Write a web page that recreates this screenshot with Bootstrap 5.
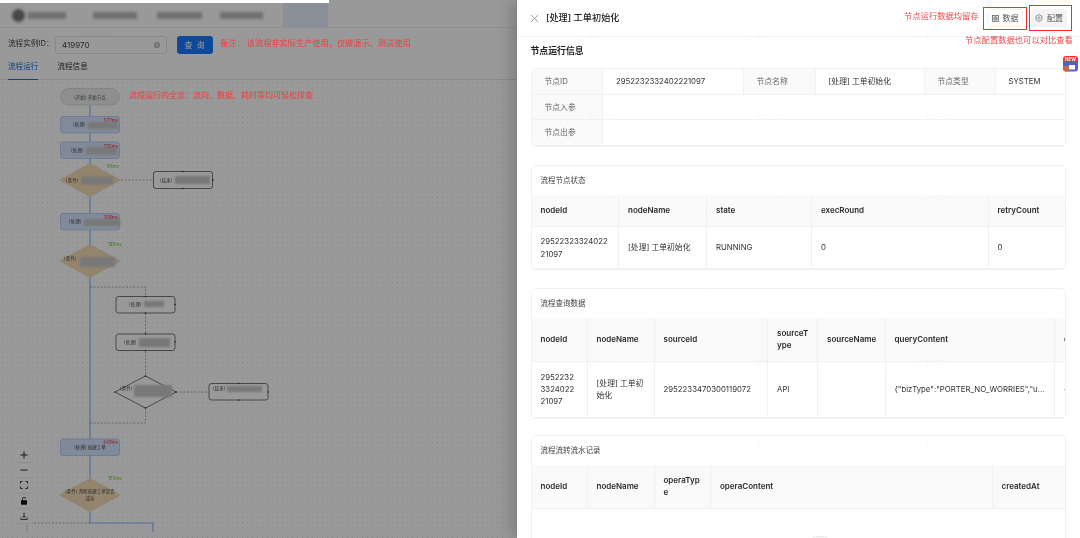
<!DOCTYPE html>
<html lang="zh-CN">
<head>
<meta charset="UTF-8" />
<meta name="viewport" content="width=device-width, initial-scale=1" />
<title>流程实例</title>
<link href="https://cdn.jsdelivr.net/npm/bootstrap@5.3.3/dist/css/bootstrap.min.css" rel="stylesheet" />
<style>
    html, body { height: 100%; overflow: hidden; }
    body {
        font-family: Inter, "Noto Sans CJK SC", sans-serif;
        font-size: 8px;
        color: #333;
        background: #fff;
    }
    .page-wrap { height: 538px; }

    /* left pane, dimmed by the drawer mask */
    .left-pane { width: 517px; flex: none; filter: blur(.55px); background: #fff; }
    .left-mask { position: absolute; inset: 0; background: rgba(0, 0, 0, .4); z-index: 1; }
    .top-strip { height: 3px; width: 329px; background: #fff; position: relative; z-index: 2; }
    .head-bar { height: 25px; border-bottom: 1px solid #f0f0f0; padding-left: 12px; }
    .head-logo { width: 13px; height: 13px; border-radius: 50%; background: #777; filter: blur(1.5px); }
    .head-block { height: 7px; background: #bbb; filter: blur(1.8px); }
    .head-active { width: 45px; height: 25px; background: #e6efff; margin-left: 20px; }
    .w-38 { width: 38px; margin-left: 3px; }
    .w-44 { width: 44px; margin-left: 27px; }
    .w-45 { width: 45px; margin-left: 20px; }
    .w-43 { width: 43px; margin-left: 18px; }

    .query-row { padding: 8px 0 0 8px; height: 26px; }
    .query-label { font-size: 7.6px; color: #444; width: 47px; }
    .query-input { width: 112px; height: 18px; border: 1px solid #e2e2e2; border-radius: 3px; padding: 0 6px; font-size: 8px; color: #444; }
    .clear-dot { width: 6px; height: 6px; }
    .query-btn { width: 36px; height: 18px; margin-left: 10px; padding: 0; font-size: 8px; line-height: 18px; border: 0; border-radius: 3px; background: #1a78ff; color: #fff; letter-spacing: 1px; }
    .note-red { color: #f23c3c; position: relative; z-index: 2; }
    .query-note { margin-left: 7px; font-size: 8.2px; line-height: 15px; }

    .tab-row { height: 26px; padding-left: 8px; border-bottom: 1px solid #e8e8e8; }
    .tab-link { font-size: 7.6px; color: #333; height: 26px; line-height: 26px; padding: 0; margin-right: 19px; text-decoration: none; }
    .tab-link.active { color: #1a6fe0; border-bottom: 1px solid #1a6fe0; height: 26px; }

    .flow-canvas {
        height: 458px;
        background-image: radial-gradient(rgba(0, 0, 0, .09) .5px, transparent .7px);
        background-size: 5px 5px;
        margin-right: 12px;
    }
    .flow-svg { position: absolute; left: 0; top: 0; font-family: Inter, "Noto Sans CJK SC", sans-serif; }
    .flow-note { position: absolute; left: 129px; top: 10px; font-size: 8px; line-height: 10px; }
    .zoom-bar { position: absolute; left: 16px; top: 368px; width: 16px; background: #fff; z-index: 0; }
    .zoom-btn { height: 15.2px; border-bottom: 1px solid #eee; }

    /* right drawer */
    .drawer { width: 563px; flex: none; background: #fff; box-shadow: -6px 0 14px rgba(0, 0, 0, .18); z-index: 3; filter: blur(.25px); }
    .drawer-head { height: 37px; border-bottom: 1px solid #f3f3f3; padding-left: 13px; }
    .drawer-title { font-size: 9.2px; font-weight: 500; color: #222; margin-left: 7px; }
    .act-note { color: #f04848; font-size: 8.3px; position: absolute; }
    .note-save { left: 387px; top: 10px; }
    .note-conf { left: 448px; top: 34px; }
    .act-box { position: absolute; border: 1.5px solid #f03030; }
    .box-data { left: 466px; top: 7px; width: 44px; height: 23px; }
    .box-conf { left: 512px; top: 5px; width: 43px; height: 26px; }
    .act-btn { position: absolute; top: 9px; height: 18px; padding: 0; font-size: 8px; color: #555; border-radius: 3px; gap: 4px; }
    .btn-data { left: 470px; width: 36px; background: #fff; border: 1px solid #f3f3f3; }
    .btn-conf { left: 514px; width: 36px; background: #f4f4f4; border: 0; }
    .new-tag { position: absolute; left: 545px; top: 56px; }

    .drawer-body { padding: 0 14px 0 13.5px; }
    .sect-title { font-size: 8.9px; font-weight: 700; color: #222; height: 31px; line-height: 27px; margin: 0; }
    .info-box, .sect-card { border: 1px solid #f0f0f0; border-radius: 5px; overflow: hidden; }
    .sect-card { --bs-card-bg: #fff; }
    .sect-card .card-header { height: 29px; line-height: 29px; padding: 0 9px; font-size: 7.5px; color: #444; background: #fff; border: 0; border-radius: 0; }
    .gap-a { margin-top: 18px; }
    .gap-b { margin-top: 16px; }
    .flow-tbl { table-layout: fixed; font-size: 7.8px; line-height: 12.4px; margin: 0; color: #333; }
    .flow-tbl > * > tr > * { padding: 0 9px; vertical-align: middle; border-width: 0 1px 1px 0; border-style: solid; border-color: #f1f1f1; word-break: break-all; background: #fff; box-shadow: none; }
    .flow-tbl > thead > tr > th { background: #fafafa; font-size: 8px; font-weight: 600; color: #2a2a2a; padding-right: 5px; }
    .flow-tbl > thead > tr > th.th-wrap { padding-right: 9px; }
    .flow-tbl .lbl { background: #fafafa; color: #666; padding-left: 13px; font-weight: 400; }
    .flow-tbl .val { padding-left: 13px; }
    .info-tbl tr { height: 25.4px; }
    .row-h32 { height: 32px; }
    .row-h42 { height: 42px; }
    .row-h43 { height: 43px; }
    .row-h56 { height: 56px; }
    .row-h44 { height: 44px; }
    .empty-body { height: 80px; position: relative; }
    .empty-mark { position: absolute; left: 280px; top: 27px; width: 15px; height: 8px; border: 1px solid #ececec; border-radius: 2px; background: #f7f7f7; }
    .one-line { white-space: nowrap; overflow: hidden; text-overflow: ellipsis; }

    .mark-layer { position: absolute; inset: 0; overflow: hidden; pointer-events: none; z-index: 5; }
    .mark-item { position: absolute; font-size: 7.5px; color: rgba(0, 0, 0, .045); transform: rotate(-10deg); white-space: nowrap; }
</style>
</head>
<body>
<div class="page-wrap d-flex position-relative overflow-hidden">

    <!-- left: flow page under the mask -->
    <div class="left-pane position-relative overflow-hidden">
        <div class="left-mask"></div>
        <div class="top-strip"></div>
        <div class="head-bar d-flex align-items-center">
            <span class="head-logo"></span>
            <span class="head-block w-38"></span>
            <span class="head-block w-44"></span>
            <span class="head-block w-45"></span>
            <span class="head-block w-43"></span>
            <span class="head-active"></span>
        </div>

        <div class="query-row d-flex align-items-start">
            <span class="query-label lh-lg">流程实例ID：</span>
            <div class="query-input d-flex align-items-center justify-content-between">
                <span>419970</span>
                <svg class="clear-dot" viewBox="0 0 12 12"><circle cx="6" cy="6" r="6" fill="#bdbdbd"/><path d="M4 4l4 4M8 4l-4 4" stroke="#fff" stroke-width="1.4"/></svg>
            </div>
            <button class="btn query-btn" type="button">查 询</button>
            <span class="note-red query-note">备注： 该流程非实际生产使用，仅做演示、测试使用</span>
        </div>

        <nav class="nav tab-row">
            <a class="nav-link tab-link active" href="#">流程运行</a>
            <a class="nav-link tab-link" href="#">流程信息</a>
        </nav>

        <div class="flow-canvas position-relative">
            <svg class="flow-svg" width="517" height="458" viewBox="0 80 517 458">
                <defs><filter id="smear" x="-20%" y="-40%" width="140%" height="180%"><feGaussianBlur stdDeviation="1.2"/></filter></defs>

                <!-- main path -->
                <path d="M90 105V523H153V532" fill="none" stroke="#8db8ff" stroke-width="1.2"/>
                <!-- unused branches -->
                <g fill="none" stroke="#777" stroke-width=".6" stroke-dasharray="2 1.6">
                    <path d="M121 180H153"/>
                    <path d="M90 287H145.500V296M145.500 313V334M145.500 351V376M145.500 408V423H90"/>
                    <path d="M176 392H209"/>
                    <path d="M90 523H27V532"/>
                </g>

                <!-- start -->
                <rect x="60.500" y="88.500" width="59" height="16.500" rx="8" fill="#ededed" stroke="#d2d2d2" stroke-width=".7"/>
                <text x="90" y="98.500" font-size="4.500" text-anchor="middle" fill="#555">[开始] 开始节点</text>

                <!-- executed steps -->
                <g fill="#d8e6ff" stroke="#a8c8ff" stroke-width=".8">
                    <rect x="60.500" y="116.500" width="59" height="16.500" rx="2.500"/>
                    <rect x="60.500" y="142" width="59" height="16.500" rx="2.500"/>
                    <rect x="60.500" y="213.500" width="59" height="16.500" rx="2.500"/>
                    <rect x="60.500" y="439" width="59" height="16.500" rx="2.500"/>
                </g>
                <g fill="#f6dcb8">
                    <polygon points="90,163 121,180 90,197 59,180"/>
                    <polygon points="90,244 121,261 90,278 59,261"/>
                    <polygon points="90,478 121,495 90,512 59,495"/>
                </g>

                <!-- steps not run -->
                <g fill="#fff" stroke="#555" stroke-width=".8">
                    <rect x="153.500" y="171.500" width="59" height="17" rx="2.500"/>
                    <rect x="116" y="296.500" width="59" height="16.500" rx="2.500"/>
                    <rect x="116" y="334" width="59" height="16.500" rx="2.500"/>
                    <rect x="209" y="383.500" width="59" height="16.500" rx="2.500"/>
                    <polygon points="145.500,376 176,392 145.500,408 115,392"/>
                </g>

                <!-- redacted names -->
                <g fill="#c8c8c8" filter="url(#smear)">
                    <rect x="88" y="122" width="30" height="7"/>
                    <rect x="86" y="147.500" width="31" height="7"/>
                    <rect x="81" y="176.500" width="32" height="8"/>
                    <rect x="175" y="176" width="35" height="8"/>
                    <rect x="84" y="219" width="36" height="7"/>
                    <rect x="80" y="257" width="35" height="10"/>
                    <rect x="144" y="301" width="20" height="6"/>
                    <rect x="139" y="338" width="31" height="9"/>
                    <rect x="134" y="385" width="38" height="12"/>
                    <rect x="227" y="386" width="35" height="6"/>
                </g>

                <!-- node titles -->
                <g font-size="4.500" fill="#444">
                    <text x="73" y="126">[处理]</text>
                    <text x="71" y="152">[处理]</text>
                    <text x="66" y="182">[条件]</text>
                    <text x="160" y="182">[结束]</text>
                    <text x="69" y="223">[处理]</text>
                    <text x="64" y="260">[条件]</text>
                    <text x="129" y="306">[处理]</text>
                    <text x="124" y="344">[处理]</text>
                    <text x="120" y="390">[条件]</text>
                    <text x="213" y="390">[结束]</text>
                    <text x="90" y="449" text-anchor="middle">[处理] 创建工单</text>
                    <text x="90" y="493" text-anchor="middle">[条件] 判断创建工单是否</text>
                    <text x="90" y="500" text-anchor="middle">成功</text>
                </g>

                <!-- timings -->
                <g font-size="4.500" fill="#ff2a40" text-anchor="end">
                    <text x="118" y="121.500">577ms</text>
                    <text x="118" y="147.500">725ms</text>
                    <text x="118" y="219">308ms</text>
                    <text x="118" y="444">449ms</text>
                </g>
                <g font-size="4.500" fill="#5fd02a">
                    <text x="107" y="167.500">95ms</text>
                    <text x="108" y="245.500">185ms</text>
                    <text x="108" y="479.500">152ms</text>
                </g>

                <!-- ports on the outlined nodes -->
                <g fill="#333">
                    <circle cx="183" cy="171.500" r=".8"/><circle cx="183" cy="188.500" r=".8"/><circle cx="213" cy="180" r=".8"/>
                    <circle cx="145.500" cy="296.500" r=".8"/><circle cx="145.500" cy="313" r=".8"/><circle cx="175" cy="304.500" r=".8"/>
                    <circle cx="145.500" cy="334" r=".8"/><circle cx="145.500" cy="350.500" r=".8"/><circle cx="175" cy="342" r=".8"/>
                    <circle cx="145.500" cy="376" r=".8"/><circle cx="145.500" cy="408" r=".8"/><circle cx="176" cy="392" r=".8"/><circle cx="115" cy="392" r=".8"/>
                    <circle cx="238.500" cy="383.500" r=".8"/><circle cx="238.500" cy="400" r=".8"/><circle cx="268" cy="392" r=".8"/>
                </g>
            </svg>
            <span class="note-red flow-note">流程运行的全览：流向、数据、耗时等均可轻松排查</span>

            <div class="zoom-bar d-flex flex-column">
                <div class="zoom-btn d-flex align-items-center justify-content-center">
                    <svg width="8" height="8" viewBox="0 0 8 8"><path d="M4 .5v7M.5 4h7" stroke="#222" stroke-width="1"/></svg>
                </div>
                <div class="zoom-btn d-flex align-items-center justify-content-center">
                    <svg width="8" height="8" viewBox="0 0 8 8"><path d="M.5 4h7" stroke="#222" stroke-width="1"/></svg>
                </div>
                <div class="zoom-btn d-flex align-items-center justify-content-center">
                    <svg width="8" height="8" viewBox="0 0 8 8"><path d="M.5 2.500V.5h2M5.500.5h2v2M7.500 5.500v2h-2M2.500 7.500h-2v-2" fill="none" stroke="#222" stroke-width=".9"/></svg>
                </div>
                <div class="zoom-btn d-flex align-items-center justify-content-center">
                    <svg width="8" height="8" viewBox="0 0 8 8"><rect x="1" y="3.200" width="6" height="4.500" fill="#111"/><path d="M2.500 3.200V1.800a1.500 1.500 0 0 1 3 0" fill="none" stroke="#111" stroke-width=".8"/></svg>
                </div>
                <div class="zoom-btn d-flex align-items-center justify-content-center">
                    <svg width="8" height="8" viewBox="0 0 8 8"><path d="M4 .5v5M2.500 4L4 5.500 5.500 4M.8 5.500v2h6.400v-2" fill="none" stroke="#222" stroke-width=".8"/></svg>
                </div>
            </div>
        </div>
    </div>

    <!-- right: node drawer -->
    <div class="drawer position-relative overflow-hidden">
        <div class="drawer-head d-flex align-items-center">
            <svg width="9" height="9" viewBox="0 0 9 9"><path d="M1 1l7 7M8 1L1 8" stroke="#999" stroke-width=".9"/></svg>
            <span class="drawer-title">[处理] 工单初始化</span>
        </div>

        <span class="act-note note-save">节点运行数据均留存</span>
        <span class="act-note note-conf">节点配置数据也可以对比查看</span>
        <button class="btn act-btn btn-data d-flex align-items-center justify-content-center" type="button">
            <svg width="7" height="7" viewBox="0 0 7 7"><g fill="none" stroke="#666" stroke-width=".8"><rect x=".5" y=".5" width="2.500" height="2.500"/><rect x="4" y=".5" width="2.500" height="2.500"/><rect x=".5" y="4" width="2.500" height="2.500"/><rect x="4" y="4" width="2.500" height="2.500"/></g></svg>
            数据
        </button>
        <button class="btn act-btn btn-conf d-flex align-items-center justify-content-center" type="button">
            <svg width="8" height="8" viewBox="0 0 8 8"><path d="M4 .5l3 1.700v3.600L4 7.500 1 5.800V2.200z" fill="none" stroke="#777" stroke-width=".8"/><circle cx="4" cy="4" r="1.200" fill="none" stroke="#777" stroke-width=".7"/></svg>
            配置
        </button>
        <span class="act-box box-data"></span>
        <span class="act-box box-conf"></span>

        <svg class="new-tag" width="17" height="16" viewBox="0 0 17 16">
            <rect x="1" y="3" width="15" height="12.500" rx="3" fill="#5b5bd6"/>
            <path d="M1 12a3 3 0 0 0 3 3.500h3V10H1z" fill="#c96a3c"/>
            <rect x="7" y="9" width="6" height="4.500" fill="#fff"/>
            <path d="M1 6V3a3 3 0 0 1 3-3h9a3 3 0 0 1 3 3v3z" fill="#f0303a"/>
            <text x="8.500" y="5" font-size="4.600" font-weight="700" text-anchor="middle" fill="#fff">NEW</text>
        </svg>

        <div class="drawer-body">
            <h6 class="sect-title">节点运行信息</h6>

            <div class="info-box">
                <table class="table flow-tbl info-tbl">
                    <colgroup><col width="71"><col width="140.500"><col width="72"><col width="109"><col width="71"><col width="71"></colgroup>
                    <tbody>
                        <tr>
                            <th class="lbl">节点ID</th><td class="val">2952232332402221097</td>
                            <th class="lbl">节点名称</th><td class="val">[处理] 工单初始化</td>
                            <th class="lbl">节点类型</th><td class="val">SYSTEM</td>
                        </tr>
                        <tr><th class="lbl">节点入参</th><td class="val" colspan="5"></td></tr>
                        <tr><th class="lbl">节点出参</th><td class="val" colspan="5"></td></tr>
                    </tbody>
                </table>
            </div>

            <div class="card sect-card gap-a">
                <div class="card-header">流程节点状态</div>
                <table class="table flow-tbl">
                    <colgroup><col width="87"><col width="88"><col width="105"><col width="176.500"><col width="78"></colgroup>
                    <thead><tr class="row-h32"><th>nodeId</th><th>nodeName</th><th>state</th><th>execRound</th><th>retryCount</th></tr></thead>
                    <tbody><tr class="row-h42"><td>2952232332402221097</td><td>[处理] 工单初始化</td><td>RUNNING</td><td>0</td><td>0</td></tr></tbody>
                </table>
            </div>

            <div class="card sect-card gap-a">
                <div class="card-header">流程查询数据</div>
                <table class="table flow-tbl">
                    <colgroup><col width="55.500"><col width="67"><col width="113.500"><col width="50"><col width="67.500"><col width="169.500"><col width="100"></colgroup>
                    <thead><tr class="row-h43"><th>nodeId</th><th>nodeName</th><th>sourceId</th><th>sourceType</th><th>sourceName</th><th>queryContent</th><th>dataContent</th></tr></thead>
                    <tbody><tr class="row-h56"><td>2952232332402221097</td><td>[处理] 工单初始化</td><td>2952233470300119072</td><td>API</td><td></td><td><div class="one-line">{"bizType":"PORTER_NO_WORRIES","userId":1}</div></td><td><div class="one-line">{"code":0}</div></td></tr></tbody>
                </table>
            </div>

            <div class="card sect-card gap-b">
                <div class="card-header">流程流转流水记录</div>
                <table class="table flow-tbl">
                    <colgroup><col width="55.500"><col width="67"><col width="56.500"><col width="281.500"><col width="74.500"></colgroup>
                    <thead><tr class="row-h44"><th>nodeId</th><th>nodeName</th><th class="th-wrap">operaType</th><th>operaContent</th><th>createdAt</th></tr></thead>
                </table>
                <div class="empty-body"><span class="empty-mark"></span></div>
            </div>
        </div>
    </div>

    <!-- name watermark repeated over the whole picture -->
    <div class="mark-layer" id="marks"></div>
</div>

<script src="https://cdn.jsdelivr.net/npm/bootstrap@5.3.3/dist/js/bootstrap.bundle.min.js"></script>
<script>
    const layer = document.getElementById('marks');
    for (let row = 0; row < 7; row++) {
        for (let col = 0; col < 7; col++) {
            const el = document.createElement('span');
            el.className = 'mark-item';
            el.textContent = '许俊贤（junxian666.xu）';
            el.style.left = (27 + col * 168.5) + 'px';
            el.style.top = (32 + row * 82) + 'px';
            layer.appendChild(el);
        }
    }
</script>
</body>
</html>
